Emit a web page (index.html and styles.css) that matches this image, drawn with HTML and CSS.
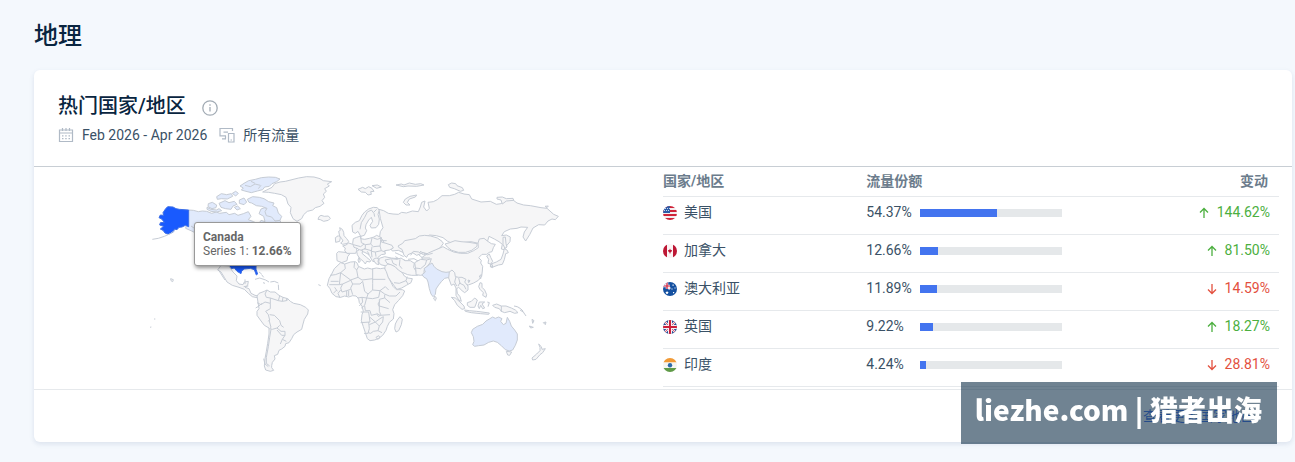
FILE: index.html
```html
<!DOCTYPE html>
<html lang="zh-CN">
<head>
    <meta charset="UTF-8">
    <meta name="viewport" content="width=device-width, initial-scale=1.0">
    <title>地理</title>
    <link rel="stylesheet" href="styles.css">
</head>
<body>
    <main class="page">
        <h1 class="page-title">地理</h1>

        <section class="card">
            <header class="card-header">
                <div class="card-title">
                    <h2>热门国家/地区</h2>
                    <svg class="info-icon" viewBox="0 0 16 16" aria-hidden="true">
                        <circle cx="8" cy="8" r="7.2"/>
                        <path d="M8 7v4.5M8 4.3v1.4"/>
                    </svg>
                </div>
                <div class="card-meta">
                    <svg class="meta-icon" viewBox="0 0 16 16" aria-hidden="true">
                        <path d="M1.5 3h13v11.5h-13zM1.5 6h13M4.5 1v3M8 1v3M11.5 1v3"/>
                        <path d="M4 8.8h1.5M7.2 8.8h1.5M10.5 8.8H12M4 11.7h1.5M7.2 11.7h1.5M10.5 11.7H12"/>
                    </svg>
                    <span class="meta-date">Feb 2026 - Apr 2026</span>
                    <svg class="meta-icon" viewBox="0 0 16 16" aria-hidden="true">
                        <path d="M13.5 4V1.5H1v7.3h6M4.5 5.2H9M6.5 8.8v3M3 11.8h4"/>
                        <path d="M9.5 6.5h5.5v8.5H9.500zM11.5 13h1.5"/>
                    </svg>
                    <span>所有流量</span>
                </div>
            </header>

            <div class="card-body">
                <div class="map">
                    <svg class="map-svg" viewBox="0 0 1236 600" role="img" aria-label="世界地图">
                        <!-- north america -->
                        <g transform="translate(-15 -15)">
                            <path class="share" d="M131 120l14 1 15 4 12-2 13 1 15 6 14-4 10 4 20-3 8 7 17-4 10 6 16-5 15-6 8 14-8 10 16 6 14 8 8-12 12 4-4-16-14-8 6-14 12-4 16 14 14 4 6 12 10 10 4 16-10 24-200 20-60-30-18-8z"/>
                            <path class="share" d="M190 101l12-4 13 8-2 8-12 3-12-6zM215 80l14-9 16 3 14-3 4 8-16 8-18-1-12 2zM222 100l18-8 12 6 16-4 8 9-12 5-6 10-16-2-14-4zM283 90l14-6 8 12-8 8-14-4zM262 70l10-6 8 6-8 8zM186 112l12 6 16 2 8-4 8 6-14 4-18-2-12-6zM268 112l10-4 8 8-10 4z"/>
                            <path class="share" d="M285 48l12-8 14-8 20-4 18-5 22-2 20 1 14 5-10 8-14 6-8 8-14 2-6 8-16 4-18 5-16-4-14-4 6-6z"/>
                            <path d="M300 46l16 4 14-8 16 4M318 34l12 6M340 56l8-10"/>
                            <path class="share" d="M307 88l16-8 20 2 14 4 14 9 16 4-4 8 12 6 5 16 10 10-5 12-15 2-10-12-16-4-4-12 6-10-16-6-16-2-14-8-8-2z"/>
                            <path class="top" d="M62 116l6-6 16 1 9 5 10 2 14 1 14 1v50l-10-4-10 5-9 1-6 7-8-2-2 8-8 4-8 4-10-4-6-8-8-4 10-8-12-4 2-7 12-1-8-10-8-4 4-8 10 1-2-8z"/>
                            <path d="M88 182l-12 9-18 8-18 6-18 3M138 168l12 8 6 12"/>
                            <path class="top" d="M215 280l130 0-12 8v10l5 14-4 3-6-16-12-4-18 2-8 6-2 8-12-7-8-10-10 2-12-8z"/>
                        </g>
                        <!-- greenland, europe, russia -->
                        <g transform="translate(390 -15)">
                            <path class="land" d="M-52 66l12-6 16-8 8-11 16-5 16-2 20-5 20-5 24-4 22 1 18 5 10 6 25 3-13 7 6 6-14 8 5 8-9 8 4 10-8 10 6 8-12 9-14 4-8 7-16 4-11 10-6 12-14 8-12-8-8-18 2-16-9-10-6-20-14-8-20-4-18-3z"/>
                            <path class="land" d="M117 140l6-4 10 3 12-1 6 7-6 6-14 3-10-5-7-1z"/>
                            <path class="land" d="M234 58l14-6 8 4 10-6 10 5 6 9-10 1 2 8-10 2-8-8-12-1zM276 47l16-2 12 6-14 4zM348 45l16-3 8 3 16-6 18 4 16-2 10 4-22 4-26-1-14 2zM378 105l-8-8 6-10 14-8 20-4-4 6-18 6-6 10 8 8z"/>
                            <path class="land" d="M176 184l5-3-2-8 8 5 4 9 1 10 8 9 6 8-3 6-15 3-6-4 7-6-4-7-6-8zM166 203l9-6 6 6-2 11-12 3z"/>
                            <path class="land" d="M216 166l10-9 12-5 8-16 8-10 12-9 14-5 12 1 6 8-4 12 4 14-2 16-8 10-14 1-4-8 8-12-4-12-8 8-8 14-2 10 4 8-7 14-11 3-8-15-8 6-8-4z"/>
                            <path d="M240 178l4-20 10-16 8-16 12-6 8 10 2 10M290 118l-8 8"/>
                            <path class="land" d="M297 118l14 4 14 8 14 2 16 1 10-6 14 2 18-6 18 2 6-14 4-14 10-4-4 18 9 12 8-8-4-18 16-2 12-6 14-12 22 0 16-4 12-6 16 5 16 2 7 13 28 9 28-2 18 9 14-2 8-7 14-6 14 2 12 9 20 6 20 2 32 6 18 2 20 18 14 6-9 10-10-2-12 6-10 12-18-1-17 10-10 20-12 19-8-12 4-15 10-14-20-1-12 4-20 2-18 8-8 12 14-2 12 6-1 14-10 12-8 12-8-2 3-14-10-8-14-8-16-8-6 20-12 5-18-5-18-4-20 2-16 3-16 2-18-8-14-11-20-6-20-2-16 8-18 2-10 8-14-2-8 12-8 8 6 12-8 6-18-8-18 2-8-12-16-8-4-12-10-12 2-14 8-12-4-14-4-14z"/>
                            <path class="land" d="M505 44l10-5 12 2 4 6 16 6 4 8-10 3-18-8-14-4zM651 82l16-1 12 5 20-1 2 6-22 2-12 9-4-12-12-3zM795 109l10-1-4 5z"/>
                            <path class="land" d="M170 250l5-5 20 2 14 5-6 8-2 12-16 6-14-6z"/>
                            <path class="land" d="M188 228l10-3 8-6 12 4 12 7 0 12-3 8-14 0-12 0-7-8 2-8z"/>
                            <path class="land" d="M218 220l2-14 10-4 12-4 0 8 12 2 14-3 14-4 8-5 12 6 2 14 14 4 18 6 4 8-12 6-14 2 2 10-12 2-10 8-6 14-10-2-8-14-6-8-12-6-12-2-6-8-12-4-2-6z"/>
                            <path d="M242 198l2 20 12 6 16-2 4-18M220 224l22 6 10-8M256 224l0 12-12 4M272 222l8 8 20-2 4-26M280 204l12 4 12-4M276 230l-2 14 12 2 18-4-4-14M252 236l22 6M274 244l2 18M286 246l2 14M304 242l12 4M300 212h20M262 244l6 10"/>
                            <path class="land" d="M230 244l8-5 10 3-2 8 14 12 12 10-2 4-10-2-4 8-6-8-12-10-6-10zM237 263l4 10-4 5-3-8zM280 268l8-4 8 2-2 8 3 10-8-2-6-8z"/>
                            <path class="land" d="M298 265l16-5 20 4 20 2 12 4 2 10-18 6-14-2-14 5-20-5-6-8z"/>
                            <path class="land" d="M354 228l14-8 6-8 16-3 16-3 12-8 16-2 18 2 20 6 14 10 4 6-10 14-14 8-4 10-18 0-14-4-20 8-12-8-14 6-4 8-8-6-6-18-8-4z"/>
                            <path d="M392 256l8-12 16 2 14 8 18-4M384 268l18-2 14 8 18 0 18-10M345 248l14 6 12 6M346 260l14 8 6 14M372 268l4 16"/>
                            <path class="land" d="M495 222l14-4 16-6 18 3 24 2 24 4 0 8-16 12-18 6-22 0-20-6-12-9z"/>
                        </g>
                        <!-- east asia -->
                        <g transform="translate(795 -15)">
                            <path class="land" d="M84 230l14 8 18 8 20 4 22 0 18-8 14-9-1-14 4-12 14-2 10 8 12 8 12 2-6 10-4 12-8 2-8 6-14 0-10 10 8 8-2 8 6 10-1 14-2 16-10 12-14 8-16 6-10-2-12-8-18-2-10-18-16 0-28 0-14-14-14-10-10-14-8-14 20-14z"/>
                            <path class="land" d="M215 258l8-6 4 10 6 12-6 8-8-2 2-12zM264 202l7-1 2 20 3 10-6 4-6-12zM268 236l8 4 4 8-8 3-4 18-6 14-12 2-16 6-8-1 2-8 16-6 14-8 6-16zM226 284l6 0 1 9-6-2z"/>
                        </g>
                        <!-- middle east, africa -->
                        <g transform="translate(510 225)">
                            <path class="land" d="M195 30l20-4 16 2 12-4 12 8 16 0 12 8-2 12 6 10 6 14-18 0-12-2-14-6-10-2-12-14-16-8-10-4z"/>
                            <path class="land" d="M284 38l18-10 18 2 14-4-4 12-10 14-8 10 0 12-10 2-14-2 0-10z"/>
                            <path d="M286 54l16 2 14-12 4-14M240 28l-2 18 8 10M215 28l4 12 12 6M296 14l12 10 22 0M300 4l22 10 16-4"/>
                            <path class="land" d="M195 50l8-8 10 2 12 6 10 10 12 8 6 10 10 6 14 2-4 12-14 8-14 8-14 4-8-10-10-14-10-14-10-14z"/>
                            <path d="M222 98l16 2 20-8 4-12M258 92l6 10"/>
                            <path class="land" d="M62 38l12 4 18-6 14-1 6 5 3 9 18 8 10-3 12 3 14-3 12 2 12-2 6 11 6 18 8 14 6 12 10 10 18 0 7 4-6 14-12 14-12 13-6 15 4 12-2 16-12 10-6 12-4 12-10 15-12 9-12 5-14 2-8-6-6-18-6-18-6-18 2-18 4-10-4-16-8-10-2-12-8-8-10-1-12 4-12-3-12 4-14-2-12-10-6-14-8-10 5-20 8-14 8-16z"/>
                            <path d="M74 42l2 14-14 12-16 6M46 74l-16 2M104 36l-2 16 8 8 6-10M110 60l4 22 12 8 32-4M158 56l0 44M158 88h38M62 68l30 22 22-8M62 68l-4 36-30 0M58 104l10-2 26-12M92 90l6 12 22 0 8-8M98 102l-6 12 6 20M68 102l-6 12 4 12 14-4 12-4M128 94l6 30 10 8 14-12 0-20M158 120l22 2 16-12M180 122l14 10 14 6 20 0 12-12M196 110l10 10M44 112l8 12M50 120l-10 10M62 120l-8 10 6 14M80 122l0 18M86 122v16M112 144l14-2 14 2 4-12M126 142l2 14-10 12M140 144l-6 22-10 8M140 144l18 2 18-4 4-20M134 168l2 14h14l4 14 16-4 6 8 6-6-4-10 0-36M178 148l16-4 0-10M194 144l16 14M178 170l-4-8 6-10M122 186h24l4 30-28 2M150 202l16 14 14-10 10-6M170 190l10 6 30-2M178 168l28 8M146 216l2 20-4 14-12 0M148 224l18-8 12 12-4 14-14 2-8 6-8-2M178 228l10-12 2-16M174 242l12 6M168 262l8-5 4 6-7 5zM32 94l24 0"/>
                            <path class="land" d="M240 200l7 8-3 16-8 18-8 4-4-10 2-14 6-12z"/>
                        </g>
                        <!-- south asia, oceania -->
                        <g transform="translate(840 255)">
                            <path class="share" d="M-2 14l8-5 6 10 8 8 16 8 12 2 16-2 6 8-8 12-8-2-10 2-10 10-8 10-8 12-2 16-7 7-6-8-5-16-4-20-4-10-8-4-6-8 10-8-4-10z"/>
                            <path class="land" d="M14 108l5 6-3 8-5-5z"/>
                            <path class="land" d="M56 54l2-18 8-6 8 8 2 12 10 2 10 0 12 6-4 8 10 12 0 12-10 8-8-6-10-10-6 4 2 14 8 10 4 14-8-4-8-14 0-22-6-12-8 4z"/>
                            <path d="M86 54l4 16 12 6 6 12M78 50l-4 16 6 12M90 68l-6 10"/>
                            <path class="land" d="M64 112l12 2 14 12 12 12 2 8-8 2-14-12-8-14zM104 150l14 2 22 2 16 2 22 3-2 4-24-2-28-3-18-4zM112 128l12-4 10-10 8 6-4 12-4 10-14 0-8-6zM148 126l16 0-8 6 8 12-6 2-6-10-4 10-4-8zM150 68l6 2 0 12 8 8 6 14-2 8-10-6 2-8-10-10-4-8zM148 48l6-4-2 12zM114 60l6 2-4 6zM188 136l12-4 14 6 14 0 16 6 12 6 8 8-10 2-14-6-16 4-10-4-6-8-14-4zM214 138v18M252 138l10 2 10 6 8 8M172 126l6 2-4 12M270 150l10 6 8 12"/>
                            <path class="share" d="M128 208l14-9 16-6 10-10 10-6 10-6 8 4 10-4 10 5-4 8 8 10 8-4 4-18 7 12 5 14 10 12 8 12 0 18-6 16-8 14-10 3-12-4-12-12-12-10-12-4-14 4-14 8-16 2-12 2-6-5 4-10-2-14-6-12z"/>
                            <path class="land" d="M229 274l16 2-6 10-6-1zM326 252l8 8 2 8 10-2-8 12-8 6-12 14-10 2-2-6 14-12 10-10 0-10zM306 178l6 4-4 8zM298 198l12 4-8 2zM340 188l8-2-2 8z"/>
                        </g>
                        <!-- central and south america -->
                        <g transform="translate(-15 285)">
                            <path class="land" d="M218 0l10-14 24 2 12 18 12 12-2 14 8 10 12 2 4-8 12-2-2 12-8 6 12 4 6 14 12 6 10 2-4 5-14-3-12-10-12-12-16-6-20-6-16-10-8-14-10-16z"/>
                            <path d="M222 2l10 16 8 12M300 28v14M296 50l14-2M330 28l14-4 18 6 10 6M376 36l12-2 12 5M354 38l6 2M400 44l1 16M342 6l8 6M350 14l6 8"/>
                            <path class="land" d="M336 78l6-8 16-6 8-4 10 6 14 0 12 10 12 6 14 4 8 8 10 6 20 4 16 8 8 8-2 12-10 16-4 14-4 16-14 8-10 8-6 12-8 12-10 3-2 8-10 8-8 4-4 12-10 4 2 10-8 10-2 10 0 6 6 8-10 3-14-4-4-12 2-22 4-22 4-24 4-28 0-18-14-8-12-16-10-14 0-12 6-8z"/>
                            <path d="M366 60l-6 12 4 10 12 2 0 16 0 16-14 8 8 10 4 16-4 4M336 98l12 6 12-8 16 4M332 114l10-6 8-8M376 84l24 8 4-14M400 92l12 2 2-12M412 94l12-2 2-8M424 92l6-4M374 134l14 2 16 16 4 14 8 6M372 150l6 22-4 4 8 2 14-4 8-8M396 174l12 10 12 0 0 12-10 0-14-16M420 196l-8 12 12 6M412 208l-6 14M378 178l-4 24-4 28-6 32 0 18 10 8M356 266l4 16 10 8"/>
                            <path d="M77 26l8 3-2 6-5-3zM14 172l5-1M27 147h4M520 44l7 3"/>
                        </g>
                    </svg>
                    <div class="map-tooltip">
                        <b>Canada</b>
                        <span>Series 1: <b>12.66%</b></span>
                    </div>
                </div>

                <table class="countries">
                    <thead>
                        <tr>
                            <th class="col-country" scope="col">国家/地区</th>
                            <th class="col-share" scope="col">流量份额</th>
                            <th class="col-change" scope="col">变动</th>
                        </tr>
                    </thead>
                    <tbody>
                        <tr>
                            <td>
                                <div class="country">
                                    <svg class="flag" viewBox="0 0 14 14" aria-hidden="true">
                                        <path fill="#f3eef0" d="M0 0h14v14H0z"/>
                                        <path fill="#cf2338" d="M0 0h14v2H0zM0 4h14v2H0zM0 8h14v2H0zM0 12h14v2H0z"/>
                                        <path fill="#2d5ca8" d="M0 0h7v7H0z"/>
                                        <path stroke="#c9d8ee" stroke-dasharray="1 1" d="M2 2.5h5M1 4.5h5"/>
                                    </svg>
                                    美国
                                </div>
                            </td>
                            <td><div class="share-cell"><span class="share-value">54.37%</span><div class="bar"><div class="bar-fill" style="width: 54.37%"></div></div></div></td>
                            <td class="change up"><svg class="arrow" viewBox="0 0 10 12" aria-hidden="true"><path d="M5 11V2M1 5.5l4-4 4 4"/></svg>144.62%</td>
                        </tr>
                        <tr>
                            <td>
                                <div class="country">
                                    <svg class="flag" viewBox="0 0 14 14" aria-hidden="true">
                                        <path fill="#fbf5f6" d="M0 0h14v14H0z"/>
                                        <path fill="#bd1734" d="M0 0h4v14H0zM10 0h4v14h-4zM7 4.5l.7 1.5 1.3 0-.5 1.8-1.1.8v1h-.8v-1l-1.1-.8L5 6h1.3z"/>
                                    </svg>
                                    加拿大
                                </div>
                            </td>
                            <td><div class="share-cell"><span class="share-value">12.66%</span><div class="bar"><div class="bar-fill" style="width: 12.66%"></div></div></div></td>
                            <td class="change up"><svg class="arrow" viewBox="0 0 10 12" aria-hidden="true"><path d="M5 11V2M1 5.5l4-4 4 4"/></svg>81.50%</td>
                        </tr>
                        <tr>
                            <td>
                                <div class="country">
                                    <svg class="flag" viewBox="0 0 14 14" aria-hidden="true">
                                        <path fill="#1450a0" d="M0 0h14v14H0z"/>
                                        <path stroke="#f4e9f0" stroke-width="2.5" d="M0 4h7M4 0v7M0 0l7 7"/>
                                        <path stroke="#d2233c" stroke-width="1.2" d="M0 4h7M4 0v7"/>
                                        <path fill="#fff" d="M4 9l.7 1 1.1.2-.9.8.2 1.2L4 11.600l-1 .6.1-1.2-.8-.8 1.2-.2zM9.5 2.5h1.2v1.2H9.500zM11.5 5.5h1v1h-1zM8.5 6.5h1v1h-1zM10 10h1.2v1.2H10z"/>
                                    </svg>
                                    澳大利亚
                                </div>
                            </td>
                            <td><div class="share-cell"><span class="share-value">11.89%</span><div class="bar"><div class="bar-fill" style="width: 11.89%"></div></div></div></td>
                            <td class="change down"><svg class="arrow" viewBox="0 0 10 12" aria-hidden="true"><path d="M5 1v9M1 6.5l4 4 4-4"/></svg>14.59%</td>
                        </tr>
                        <tr>
                            <td>
                                <div class="country">
                                    <svg class="flag" viewBox="0 0 14 14" aria-hidden="true">
                                        <path fill="#2f4d92" d="M0 0h14v14H0z"/>
                                        <path stroke="#f5eff3" stroke-width="2.2" d="M0 0l14 14M14 0L0 14"/>
                                        <path stroke="#d02a45" stroke-width=".7" d="M0 0l14 14M14 0L0 14"/>
                                        <path stroke="#f5eff3" stroke-width="4" d="M7 0v14M0 7h14"/>
                                        <path stroke="#cc1f3b" stroke-width="2" d="M7 0v14M0 7h14"/>
                                    </svg>
                                    英国
                                </div>
                            </td>
                            <td><div class="share-cell"><span class="share-value">9.22%</span><div class="bar"><div class="bar-fill" style="width: 9.22%"></div></div></div></td>
                            <td class="change up"><svg class="arrow" viewBox="0 0 10 12" aria-hidden="true"><path d="M5 11V2M1 5.5l4-4 4 4"/></svg>18.27%</td>
                        </tr>
                        <tr>
                            <td>
                                <div class="country">
                                    <svg class="flag" viewBox="0 0 14 14" aria-hidden="true">
                                        <path fill="#f6f5f2" d="M0 0h14v14H0z"/>
                                        <path fill="#f29a35" d="M0 0h14v4.3H0z"/>
                                        <path fill="#5f9a47" d="M0 10h14v4H0z"/>
                                        <circle cx="7" cy="7.2" r="2.2" fill="#2d6aa8"/>
                                    </svg>
                                    印度
                                </div>
                            </td>
                            <td><div class="share-cell"><span class="share-value">4.24%</span><div class="bar"><div class="bar-fill" style="width: 4.24%"></div></div></div></td>
                            <td class="change down"><svg class="arrow" viewBox="0 0 10 12" aria-hidden="true"><path d="M5 1v9M1 6.5l4 4 4-4"/></svg>28.81%</td>
                        </tr>
                    </tbody>
                </table>
            </div>

            <footer class="card-footer">
                <a class="more-link" href="#">查看更多国家地区</a>
            </footer>
        </section>
    </main>

    <div class="watermark">liezhe.com | 猎者出海</div>
</body>
</html>
```
FILE: styles.css
```css
:root {
    --page-bg: #f4f8fd;
    --title: #092540;
    --text: #3a5166;
    --muted: #6b7c8c;
    --line: #e6e9ec;
    --blue: #4374ef;
    --green: #4caf3f;
    --red: #e3503e;
}

* {
    box-sizing: border-box;
}

body {
    margin: 0;
    min-height: 100vh;
    background: var(--page-bg);
    color: var(--text);
    font-family: Roboto, "Noto Sans CJK SC", sans-serif;
    font-size: 14px;
    line-height: 20px;
}

.page {
    padding: 18px 3px 20px 34px;
}

.page-title {
    margin: 0 0 16px;
    color: var(--title);
    font-size: 24px;
    font-weight: 500;
    line-height: 36px;
}

.card {
    background: #fff;
    border-radius: 6px;
    box-shadow: 0 2px 5px rgba(70, 100, 140, 0.14);
}

.card-header {
    display: flex;
    flex-direction: column;
    gap: 4px;
    padding: 21px 24px;
    border-bottom: 1px solid #c8ced4;
}

.card-title {
    display: flex;
    align-items: center;
    gap: 16px;
}

.card-title h2 {
    margin: 0;
    color: var(--title);
    font-size: 20px;
    font-weight: 500;
    line-height: 30px;
}

.info-icon {
    width: 16px;
    height: 16px;
    margin-top: 3px;
    fill: none;
    stroke: #a3acb5;
    stroke-width: 1.3;
}

.card-meta {
    display: flex;
    align-items: center;
    gap: 8px;
}

.meta-date {
    padding-right: 4px;
}

.meta-icon {
    width: 16px;
    height: 16px;
    fill: none;
    stroke: #b0bac6;
    stroke-width: 1.2;
}

.card-body {
    display: grid;
    grid-template-columns: 629px 1fr;
    padding-right: 13px;
}

.map {
    position: relative;
    padding: 8px 100px 0 116px;
}

.map-svg {
    display: block;
    width: 100%;
    max-width: 412px;
}

.map-svg path {
    fill: none;
    stroke: #c6ccd5;
    stroke-width: 3;
    stroke-linejoin: round;
}

.map-svg .land {
    fill: #f6f6f7;
}

.map-svg .share {
    fill: #e1eafc;
}

.map-svg .top {
    fill: #195afe;
    stroke: #3c6fe8;
}

.map-tooltip {
    position: absolute;
    left: 160px;
    top: 55px;
    display: flex;
    flex-direction: column;
    padding: 7px 8px;
    border: 1px solid #999;
    border-radius: 3px;
    background: #fff;
    box-shadow: 1px 2px 4px rgba(0, 0, 0, 0.45);
    color: #666;
    font-size: 12px;
    line-height: 14px;
    white-space: nowrap;
}

.countries {
    width: 100%;
    border-collapse: collapse;
    table-layout: fixed;
    margin-bottom: 2px;
}

.countries th {
    height: 29px;
    padding: 0;
    border-bottom: 1px solid var(--line);
    color: var(--muted);
    font-weight: 700;
    text-align: left;
}

.countries td {
    height: 38px;
    padding: 0 0 6px;
    border-bottom: 1px solid var(--line);
}

.col-country {
    width: 33%;
}

.countries .col-change {
    padding-right: 11px;
    text-align: right;
}

.country {
    display: flex;
    align-items: center;
    gap: 7px;
}

.flag {
    width: 14px;
    height: 14px;
    margin-top: 2px;
    border-radius: 50%;
    fill: none;
}

.share-cell {
    display: flex;
    align-items: center;
}

.share-value {
    width: 54px;
}

.bar {
    width: 142px;
    height: 8px;
    margin-top: 2px;
    background: #e5e8ea;
}

.bar-fill {
    height: 100%;
    background: var(--blue);
}

.countries .change {
    padding-right: 9px;
    text-align: right;
}

.up {
    color: var(--green);
}

.down {
    color: var(--red);
}

.arrow {
    width: 10px;
    height: 12px;
    margin-right: 8px;
    fill: none;
    stroke: currentColor;
    stroke-width: 1.3;
    vertical-align: -2px;
}

.card-footer {
    display: flex;
    justify-content: flex-end;
    padding: 16px 37px;
    border-top: 1px solid var(--line);
}

.more-link {
    color: #2a62e8;
    text-decoration: none;
}

.watermark {
    position: fixed;
    right: 18px;
    bottom: 18px;
    padding: 7px 15px 15px 14px;
    background: rgba(35, 64, 87, 0.65);
    color: #fff;
    font-family: "Noto Sans CJK SC", sans-serif;
    font-size: 28px;
    font-weight: 900;
    line-height: 40px;
    white-space: nowrap;
}
```
